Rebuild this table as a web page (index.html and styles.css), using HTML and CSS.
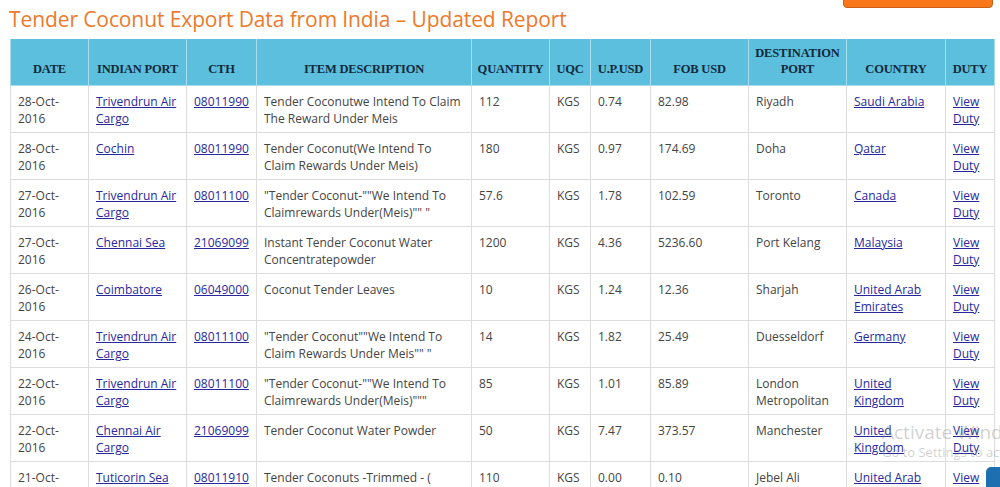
FILE: index.html
```html
<!DOCTYPE html>
<html>
<head>
<meta charset="utf-8">
<link rel="stylesheet" href="styles.css">
</head>
<body>
<div class="page">
  <div class="top">
    <h1 class="title">Tender Coconut Export Data from India – Updated Report</h1>
    <a class="cta" href="#" aria-label="Request"></a>
  </div>
  <table class="data">
    <colgroup>
      <col class="c-date"><col class="c-port"><col class="c-cth"><col class="c-desc"><col class="c-qty"><col class="c-uqc"><col class="c-up"><col class="c-fob"><col class="c-dest"><col class="c-country"><col class="c-duty">
    </colgroup>
    <thead>
      <tr>
        <th>DATE</th><th>INDIAN PORT</th><th>CTH</th><th>ITEM DESCRIPTION</th><th>QUANTITY</th><th>UQC</th><th>U.P.USD</th><th>FOB USD</th><th>DESTINATION PORT</th><th>COUNTRY</th><th>DUTY</th>
      </tr>
    </thead>
    <tbody>
      <tr><td>28-Oct-2016</td><td><a href="#">Trivendrun Air Cargo</a></td><td><a href="#">08011990</a></td><td>Tender Coconutwe Intend To Claim The Reward Under Meis</td><td>112</td><td>KGS</td><td>0.74</td><td>82.98</td><td>Riyadh</td><td><a href="#">Saudi Arabia</a></td><td><a href="#">View Duty</a></td></tr>
      <tr><td>28-Oct-2016</td><td><a href="#">Cochin</a></td><td><a href="#">08011990</a></td><td>Tender Coconut(We Intend To Claim Rewards Under Meis)</td><td>180</td><td>KGS</td><td>0.97</td><td>174.69</td><td>Doha</td><td><a href="#">Qatar</a></td><td><a href="#">View Duty</a></td></tr>
      <tr><td>27-Oct-2016</td><td><a href="#">Trivendrun Air Cargo</a></td><td><a href="#">08011100</a></td><td>"Tender Coconut-""We Intend To Claimrewards Under(Meis)"" "</td><td>57.6</td><td>KGS</td><td>1.78</td><td>102.59</td><td>Toronto</td><td><a href="#">Canada</a></td><td><a href="#">View Duty</a></td></tr>
      <tr><td>27-Oct-2016</td><td><a href="#">Chennai Sea</a></td><td><a href="#">21069099</a></td><td>Instant Tender Coconut Water Concentratepowder</td><td>1200</td><td>KGS</td><td>4.36</td><td>5236.60</td><td>Port Kelang</td><td><a href="#">Malaysia</a></td><td><a href="#">View Duty</a></td></tr>
      <tr><td>26-Oct-2016</td><td><a href="#">Coimbatore</a></td><td><a href="#">06049000</a></td><td>Coconut Tender Leaves</td><td>10</td><td>KGS</td><td>1.24</td><td>12.36</td><td>Sharjah</td><td><a href="#">United Arab Emirates</a></td><td><a href="#">View Duty</a></td></tr>
      <tr><td>24-Oct-2016</td><td><a href="#">Trivendrun Air Cargo</a></td><td><a href="#">08011100</a></td><td>"Tender Coconut""We Intend To Claim Rewards Under Meis"" "</td><td>14</td><td>KGS</td><td>1.82</td><td>25.49</td><td>Duesseldorf</td><td><a href="#">Germany</a></td><td><a href="#">View Duty</a></td></tr>
      <tr><td>22-Oct-2016</td><td><a href="#">Trivendrun Air Cargo</a></td><td><a href="#">08011100</a></td><td>"Tender Coconut-""We Intend To Claimrewards Under(Meis)"""</td><td>85</td><td>KGS</td><td>1.01</td><td>85.89</td><td>London Metropolitan</td><td><a href="#">United Kingdom</a></td><td><a href="#">View Duty</a></td></tr>
      <tr><td>22-Oct-2016</td><td><a href="#">Chennai Air Cargo</a></td><td><a href="#">21069099</a></td><td>Tender Coconut Water Powder</td><td>50</td><td>KGS</td><td>7.47</td><td>373.57</td><td>Manchester</td><td><a href="#">United Kingdom</a></td><td><a href="#">View Duty</a></td></tr>
      <tr><td>21-Oct-2016</td><td><a href="#">Tuticorin Sea</a></td><td><a href="#">08011910</a></td><td>Tender Coconuts -Trimmed - (</td><td>110</td><td>KGS</td><td>0.00</td><td>0.10</td><td>Jebel Ali</td><td><a href="#">United Arab Emirates</a></td><td><a href="#">View Duty</a></td></tr>
    </tbody>
  </table>
</div>
<div class="watermark">
  <div class="wm-big">Activate Windows</div>
  <div class="wm-small">Go to Settings to activate Windows.</div>
</div>
<div class="chat"></div>
</body>
</html>
```
FILE: styles.css
```css
html, body {
  margin: 0;
  padding: 0;
  background: #ffffff;
  overflow: hidden;
}
body {
  font-family: "Open Sans", "Liberation Sans", sans-serif;
  color: #444444;
}
.page {
  padding: 0 6px 0 10px;
}
.top {
  display: flex;
  justify-content: space-between;
  align-items: flex-start;
  height: 39px;
}
.title {
  margin: 4px 0 0 -1px;
  font-size: 21px;
  font-weight: 400;
  line-height: 30px;
  color: #ec7a2c;
  letter-spacing: -0.1px;
}
.cta {
  display: block;
  width: 148px;
  height: 36px;
  margin-top: -30px;
  margin-right: 1px;
  background: #f7771a;
  border: 1px solid #c95f14;
  border-radius: 4px;
  text-decoration: none;
}
.data {
  width: 984px;
  border-collapse: collapse;
  table-layout: fixed;
}
.c-date { width: 78px; }
.c-port { width: 98px; }
.c-cth { width: 70px; }
.c-desc { width: 215px; }
.c-qty { width: 78px; }
.c-uqc { width: 41px; }
.c-up { width: 60px; }
.c-fob { width: 98px; }
.c-dest { width: 98px; }
.c-country { width: 99px; }
.c-duty { width: 49px; }
.data th {
  background: #5bbfdd;
  color: #142a3c;
  font-family: "Liberation Serif", "Times New Roman", serif;
  font-weight: 700;
  font-size: 12.5px;
  line-height: 16px;
  letter-spacing: -0.2px;
  text-align: center;
  vertical-align: bottom;
  padding: 6px 2px 8px;
  height: 31px;
  border: 1px solid #a9dcec;
  border-top: 0;
}
.data td {
  font-size: 12px;
  line-height: 17px;
  padding: 7px 7px 5px 7px;
  vertical-align: top;
  border: 1px solid #dddddd;
  color: #444444;
}
.data a {
  color: #27289e;
  text-decoration: underline;
}
.watermark {
  position: absolute;
  left: 882px;
  top: 420px;
  width: 118px;
  overflow: hidden;
  color: rgba(120, 120, 120, 0.35);
  pointer-events: none;
  white-space: nowrap;
}
.wm-big {
  font-size: 19px;
  line-height: 24px;
}
.wm-small {
  font-size: 13px;
  line-height: 16px;
}
.chat {
  position: absolute;
  left: 986px;
  top: 467px;
  width: 14px;
  height: 20px;
  border-radius: 5px 0 0 0;
  background: #1d6fb0;
}
```
